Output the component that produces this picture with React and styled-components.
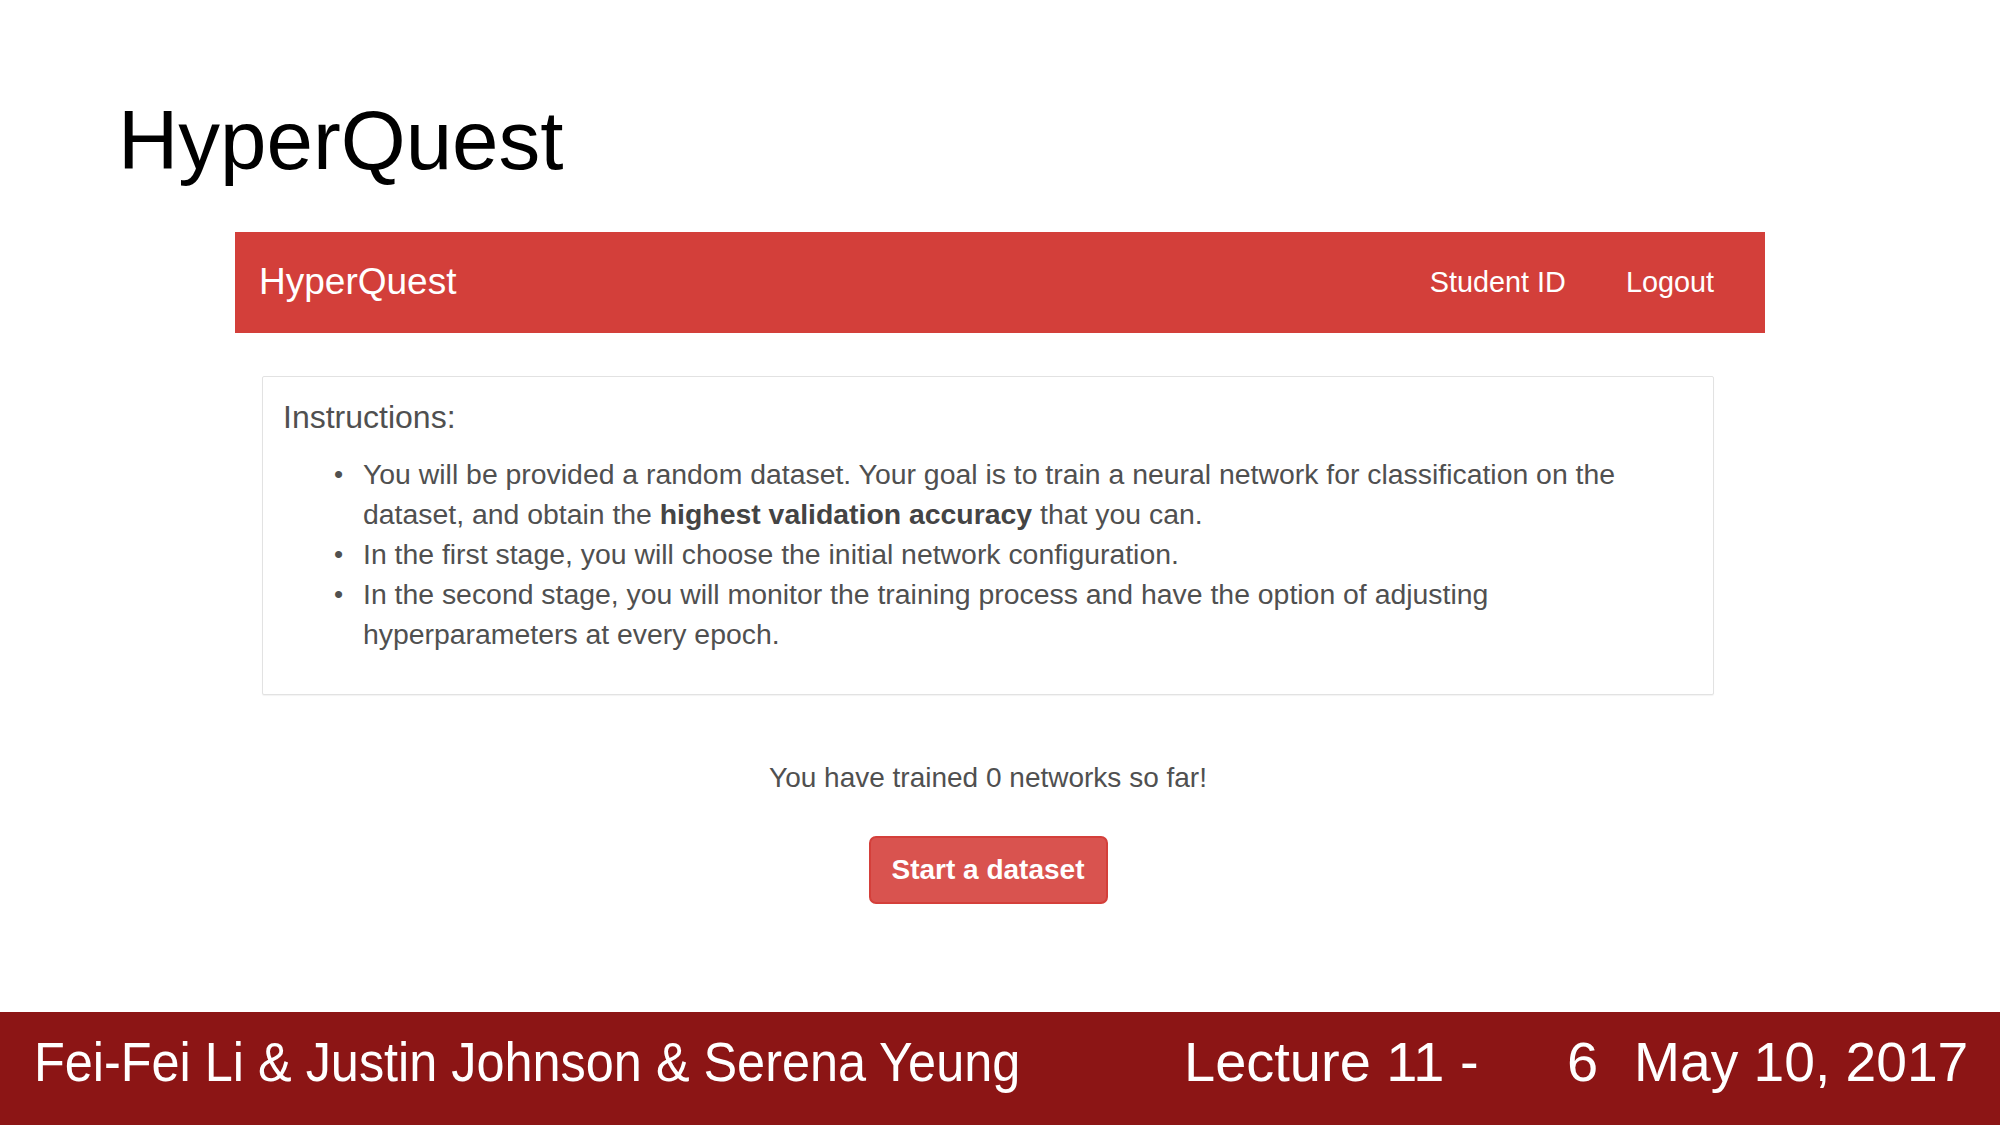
import React from "react"
import styled, { createGlobalStyle } from "styled-components"

const GlobalStyle = createGlobalStyle`
    html, body {
        margin: 0;
        padding: 0;
        background: #fff;
    }
    body {
        font-family: "Liberation Sans", Arial, sans-serif;
    }
`

const Slide = styled.div`
    display: flex;
    flex-direction: column;
    width: 2000px;
    height: 1125px;
    background: #fff;
    overflow: hidden;
`

const SlideTitle = styled.h1`
    margin: 99px 0 0 0;
    padding-left: 118px;
    font-size: 83.5px;
    line-height: 1;
    font-weight: 400;
    color: #000;
`

const Shot = styled.div`
    width: 1530px;
    margin: 49px auto 0;
    font-family: "Liberation Sans", Arial, sans-serif;
    color: #505050;
`

const Navbar = styled.nav`
    display: flex;
    align-items: center;
    justify-content: space-between;
    height: 101px;
    padding: 0 21px 0 24px;
    background: #d33f3a;
    color: #fff;
`

const Brand = styled.div`
    font-size: 37px;
`

const NavLinks = styled.div`
    display: flex;
`

const NavLink = styled.a`
    padding: 0 30px;
    font-size: 28.8px;
    color: #fff;
    text-decoration: none;
`

const Main = styled.div`
    display: flex;
    flex-direction: column;
    align-items: center;
    padding: 43px 51px 0 27px;
`

const Panel = styled.section`
    align-self: stretch;
    padding: 20px 22px 40px 20px;
    border: 1px solid #e2e2e2;
    border-radius: 2px;
    box-shadow: 0 1px 1px rgba(0, 0, 0, 0.05);
    background: #fff;
`

const PanelHeading = styled.h3`
    margin: 0 0 17px;
    font-size: 32px;
    line-height: 40px;
    font-weight: 400;
`

const List = styled.ul`
    margin: 0;
    padding-left: 80px;
    list-style: none;
    font-size: 28.4px;
    line-height: 40px;
`

const Item = styled.li`
    position: relative;
    &::before {
        content: "•";
        position: absolute;
        left: -29px;
        font-size: 26px;
    }
`

const Strong = styled.b`
    font-weight: 700;
    color: #444;
`

const Count = styled.p`
    margin: 63px 0 0;
    font-size: 28px;
    line-height: 40px;
`

const StartButton = styled.button`
    margin-top: 38px;
    width: 239px;
    height: 68px;
    border: 2px solid #d43f3a;
    border-radius: 7px;
    background: #d9534f;
    color: #fff;
    font-family: "Liberation Sans", Arial, sans-serif;
    font-size: 28px;
    font-weight: 700;
    cursor: pointer;
`

const Footer = styled.footer`
    display: grid;
    grid-template-columns: 1150px 383px 67px 1fr;
    align-items: center;
    margin-top: auto;
    height: 113px;
    padding: 0 0 13px 34px;
    box-sizing: border-box;
    background: #8c1515;
    color: #fff;
    font-size: 56px;
    line-height: 1;
`

const FooterText = styled.span`
    display: inline-block;
    white-space: nowrap;
    transform-origin: left center;
    transform: scaleX(${p => p.squeeze || 1});
`

export default function App() {
    return (
        <>
            <GlobalStyle />
            <Slide>
                <SlideTitle>HyperQuest</SlideTitle>
                <Shot>
                    <Navbar>
                        <Brand>HyperQuest</Brand>
                        <NavLinks>
                            <NavLink href="#">Student ID</NavLink>
                            <NavLink href="#">Logout</NavLink>
                        </NavLinks>
                    </Navbar>
                    <Main>
                        <Panel>
                            <PanelHeading>Instructions:</PanelHeading>
                            <List>
                                <Item>
                                    You will be provided a random dataset. Your goal is to train a neural network for classification on the
                                    dataset, and obtain the <Strong>highest validation accuracy</Strong> that you can.
                                </Item>
                                <Item>In the first stage, you will choose the initial network configuration.</Item>
                                <Item>
                                    In the second stage, you will monitor the training process and have the option of adjusting
                                    hyperparameters at every epoch.
                                </Item>
                            </List>
                        </Panel>
                        <Count>You have trained 0 networks so far!</Count>
                        <StartButton>Start a dataset</StartButton>
                    </Main>
                </Shot>
                <Footer>
                    <FooterText squeeze={0.9}>Fei-Fei Li &amp; Justin Johnson &amp; Serena Yeung</FooterText>
                    <FooterText>Lecture 11 -</FooterText>
                    <FooterText>6</FooterText>
                    <FooterText squeeze={0.985}>May 10, 2017</FooterText>
                </Footer>
            </Slide>
        </>
    )
}
